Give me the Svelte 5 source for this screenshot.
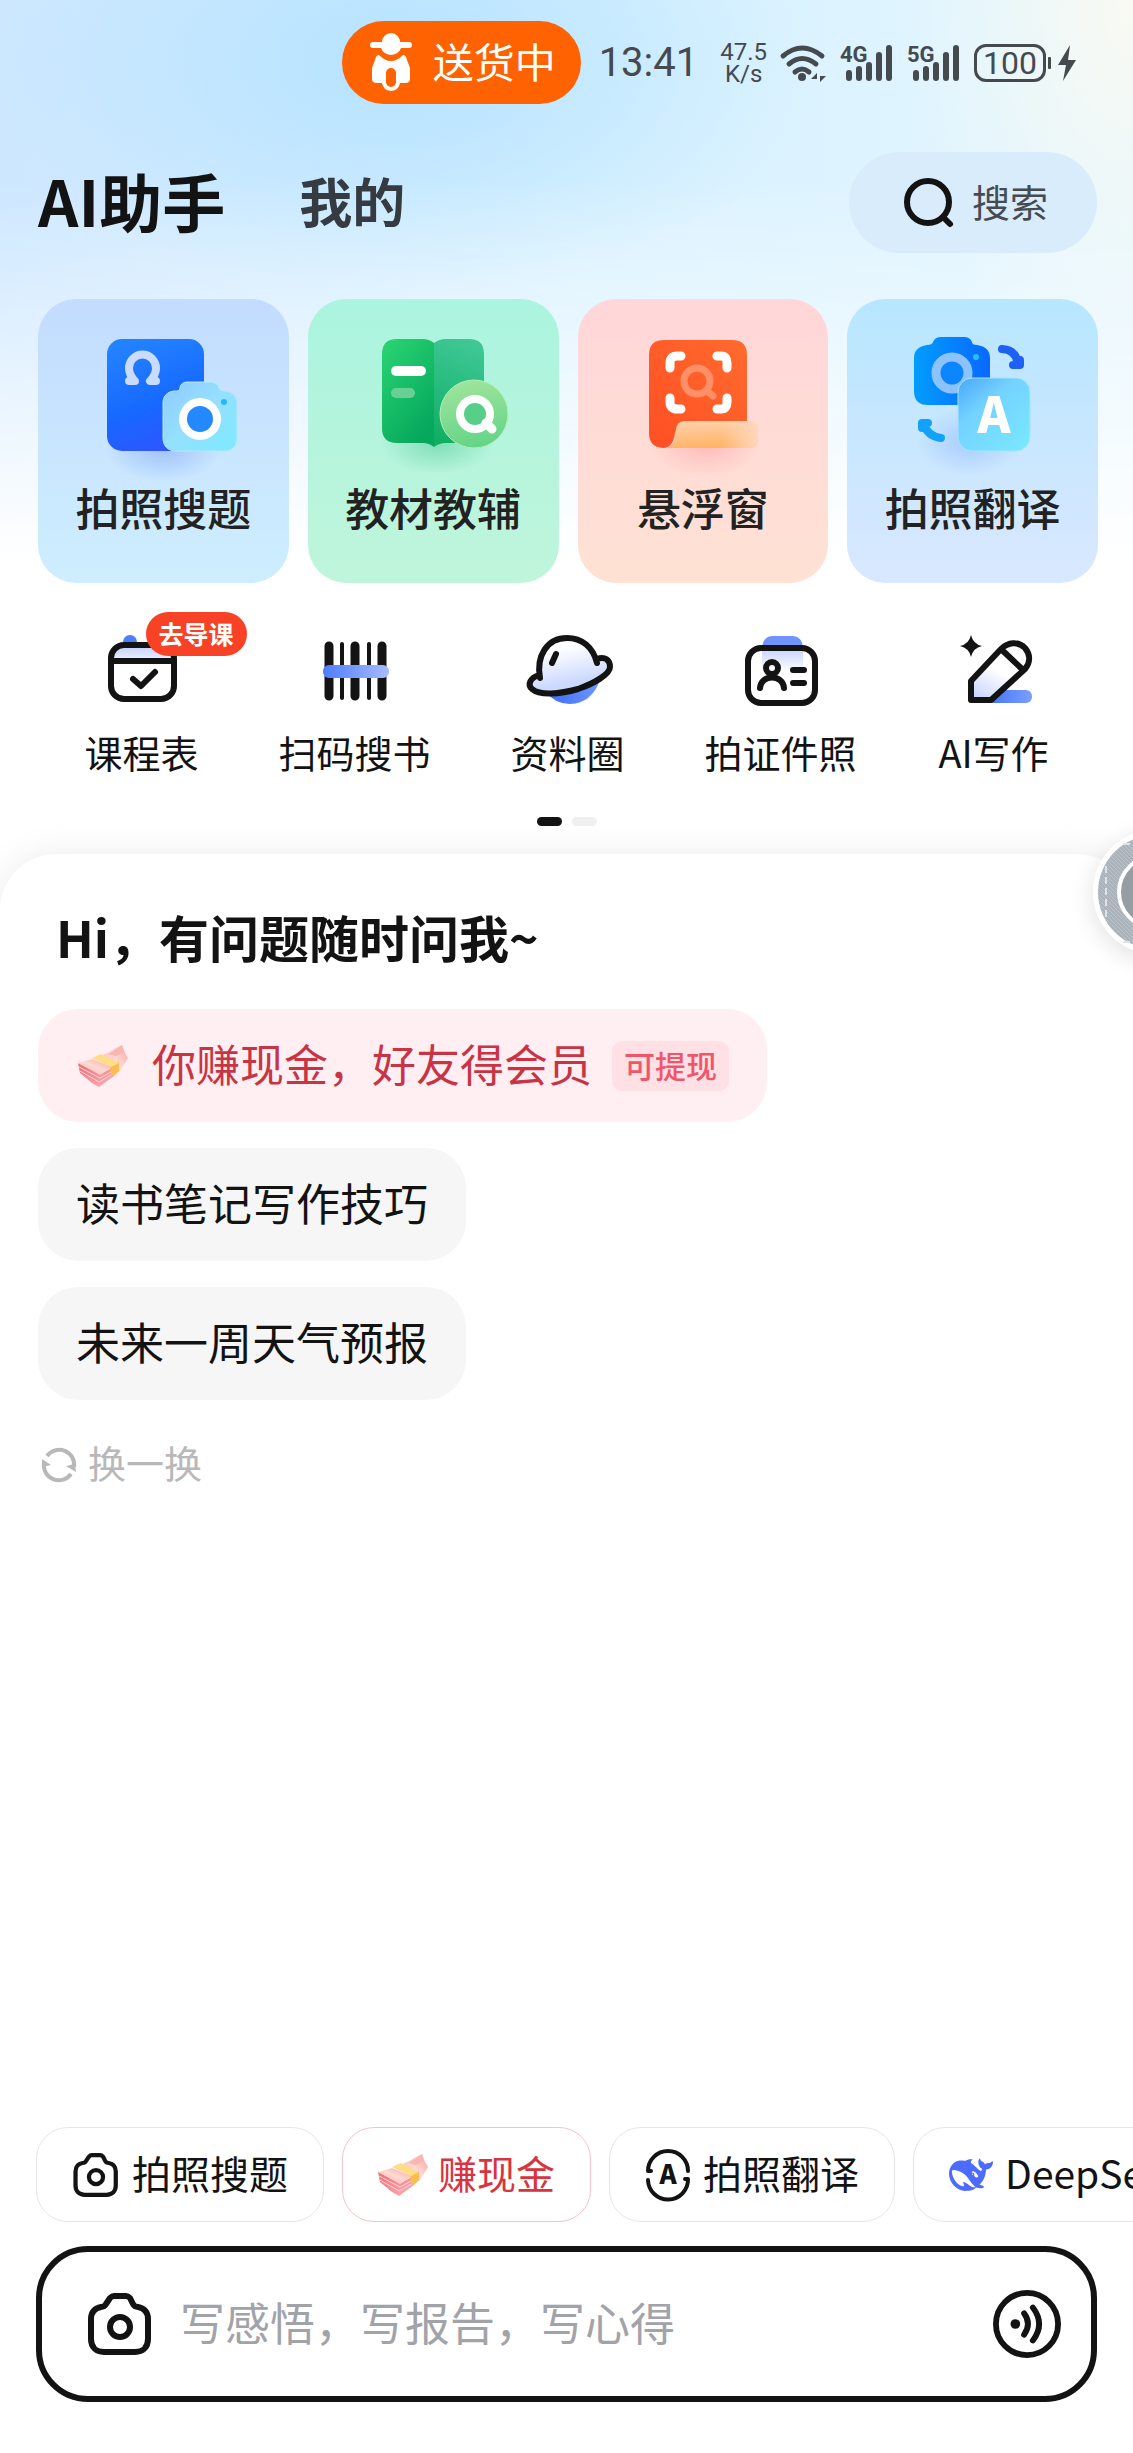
<script lang="ts">
    const cards = [
        { id: "solve", label: "拍照搜题" },
        { id: "books", label: "教材教辅" },
        { id: "float", label: "悬浮窗" },
        { id: "translate", label: "拍照翻译" },
    ];

    const tools = [
        { id: "schedule", label: "课程表", badge: "去导课" },
        { id: "barcode", label: "扫码搜书" },
        { id: "planet", label: "资料圈" },
        { id: "idcard", label: "拍证件照" },
        { id: "write", label: "AI写作" },
    ];

    const questions = ["读书笔记写作技巧", "未来一周天气预报"];

    const shortcuts = [
        { id: "camera", label: "拍照搜题" },
        { id: "cash-link", label: "赚现金" },
        { id: "translate", label: "拍照翻译" },
        { id: "deepseek", label: "DeepSeek" },
    ];

    let question = $state("");
</script>

{#snippet money()}
    <svg class="money" viewBox="0 0 50 42" aria-hidden="true">
        <defs>
            <linearGradient id="noteTop" x1="0" y1="1" x2="1" y2="0">
                <stop offset="0" stop-color="#f9a5a4" />
                <stop offset="0.5" stop-color="#fdd9d3" />
                <stop offset="1" stop-color="#f7a3a3" />
            </linearGradient>
            <linearGradient id="noteSide" x1="0" y1="0" x2="1" y2="1">
                <stop offset="0" stop-color="#ec6a72" />
                <stop offset="1" stop-color="#fbb3bd" />
            </linearGradient>
        </defs>
        <path d="M25 10 44 0 47 8 50 13 42 26 36 30Z" fill="url(#noteTop)" />
        <path d="M30 9 44 1 46 7 38 11Z" fill="#f9b5af" />
        <path d="M0 18 22 29 36 22 36 31 21 42 14 38 2 28Z" fill="url(#noteSide)" />
        <path d="M1 22 22 33 35 26M2 26 21 37 35 29" fill="none" stroke="#fcd3d3" stroke-width="1" />
        <path d="M0 18 14 14 34 22 22 30Z" fill="url(#noteTop)" />
        <path d="m32 19 9-2v9l-5 5-3-1Z" fill="#f8bd55" />
        <path d="m14 13 9-4 18 9-8 4Z" fill="#ffdc86" />
    </svg>
{/snippet}

{#snippet camera()}
    <svg class="line-icon" viewBox="0 0 68 68" aria-hidden="true">
        <path d="M28 6h12c2 0 3 1 4 2l3 6c1 2 3 3 5 3 6 1 10 5 10 12v20c0 8-5 13-13 13H18C10 62 5 57 5 49V29c0-7 4-11 10-12 3 0 4-1 5-3l4-6c1-1 2-2 4-2Z" />
        <circle cx="34" cy="37" r="10" />
    </svg>
{/snippet}

{#snippet signal(name: string)}
    <svg class="signal" viewBox="0 0 52 38" aria-hidden="true">
        <text x="0" y="18">{name}</text>
        <path d="M9 29v5M19 25v9M29 21v13M39 11v23M49 4v30" />
    </svg>
{/snippet}

<div class="page">
    <div class="status">
        <div class="delivery">
            <svg viewBox="0 0 44 56" width="44" height="56" aria-hidden="true">
                <path d="M4 7h9a9 9 0 0 1 18 0h9a3 3 0 0 1 0 6h-8q-2 6-10 7-8-1-10-7H4a3 3 0 0 1 0-6Z" fill="#fff" />
                <path d="M10 20q12 12 24 0 3 0 4 5l3 8v11q0 4-5 4h-5q-1 7-9 8-8-1-9-8H8q-5 0-5-4V33l3-8q1-5 4-5Z" fill="#fff" />
                <rect x="17" y="33" width="10" height="19" rx="5" fill="#ff6200" />
            </svg>
            <span>送货中</span>
        </div>
        <time>13:41</time>
        <div class="speed"><span>47.5</span><span>K/s</span></div>
        <svg class="wifi" viewBox="0 0 46 38" aria-hidden="true">
            <path d="M3 12Q22-4 42 12M9 20q13-11 27 0M15 28q7-6 14 0" />
            <circle cx="22" cy="33" r="4" />
            <path class="solid" d="m37 29-6 6h6Zm3 9 6-6h-6Z" />
        </svg>
        {@render signal("4G")}
        {@render signal("5G")}
        <div class="battery">
            <span class="level">100</span>
            <svg viewBox="0 0 32 38" width="32" height="38" aria-hidden="true">
                <path d="M3 14h1v10H3Z" stroke="#454a4e" stroke-width="2" stroke-linejoin="round" />
                <path d="M24 1 12 21h8l-3 16 13-21h-8Z" />
            </svg>
        </div>
    </div>

    <header>
        <nav>
            <a class="active" href="#assistant">AI助手</a>
            <a href="#mine">我的</a>
        </nav>
        <button class="search">
            <svg viewBox="0 0 50 50" width="50" height="50" aria-hidden="true">
                <circle cx="24" cy="24" r="21" />
                <path d="m39 39 7 7" />
            </svg>
            <span>搜索</span>
        </button>
    </header>

    <main>
        <section class="cards">
            {#each cards as card}
                <button class="card {card.id}">
                    <svg viewBox="0 0 160 130" aria-hidden="true">
                        {#if card.id === "solve"}
                            <defs>
                                <linearGradient id="solveBook" x1="0.3" y1="0" x2="0.6" y2="1">
                                    <stop offset="0" stop-color="#2383ff" />
                                    <stop offset="0.6" stop-color="#1768ff" />
                                    <stop offset="1" stop-color="#2f55ff" />
                                </linearGradient>
                                <linearGradient id="solveCam" x1="0" y1="0" x2="1" y2="1">
                                    <stop offset="0" stop-color="#8fcbff" />
                                    <stop offset="0.5" stop-color="#95e0ff" />
                                    <stop offset="1" stop-color="#7ceaff" />
                                </linearGradient>
                                <radialGradient id="solveShade">
                                    <stop offset="0" stop-color="#84a8f5" stop-opacity="0.6" />
                                    <stop offset="1" stop-color="#84a8f5" stop-opacity="0" />
                                </radialGradient>
                            </defs>
                            <ellipse cx="80" cy="118" rx="58" ry="34" fill="url(#solveShade)" />
                            <rect x="24" y="9" width="97" height="112" rx="15" fill="url(#solveBook)" />
                            <path d="M46 51h6q-6-6-6-13a13 13 0 0 1 27 0q0 7-6 13h6" fill="none" stroke="#c9dcff" stroke-width="8" stroke-linecap="round" stroke-linejoin="round" />
                            <path d="M105 52h22c6 0 8 3 9 6 1 2 2 3 5 3 8 0 13 5 13 12v35c0 8-5 13-13 13H93c-8 0-13-5-13-13V73c0-7 4-11 11-12 4 0 6 0 6-4 1-3 3-5 8-5Z" fill="url(#solveCam)" stroke="#b5eaff" stroke-width="1" />
                            <circle cx="117" cy="89" r="17" fill="#2488ff" stroke="#fff" stroke-width="8" />
                            <circle cx="141" cy="72" r="3" fill="#20b8ff" />
                        {:else if card.id === "books"}
                            <defs>
                                <linearGradient id="bookLeft" x1="0" y1="0" x2="0.6" y2="1">
                                    <stop offset="0" stop-color="#2bd573" />
                                    <stop offset="1" stop-color="#06a85c" />
                                </linearGradient>
                                <linearGradient id="bookRight" x1="0.5" y1="0" x2="0.3" y2="1">
                                    <stop offset="0" stop-color="#3ec795" />
                                    <stop offset="1" stop-color="#0fae63" />
                                </linearGradient>
                                <linearGradient id="bookLens" x1="0.4" y1="0" x2="0.6" y2="1">
                                    <stop offset="0" stop-color="#9fe49c" />
                                    <stop offset="1" stop-color="#62d487" />
                                </linearGradient>
                                <radialGradient id="bookShade">
                                    <stop offset="0" stop-color="#5fcf9c" stop-opacity="0.6" />
                                    <stop offset="1" stop-color="#5fcf9c" stop-opacity="0" />
                                </radialGradient>
                            </defs>
                            <ellipse cx="84" cy="114" rx="56" ry="30" fill="url(#bookShade)" />
                            <path d="M81 13q5-4 12-4h23q15 0 15 15v74q0 15-15 15H93q-7 0-12 4Z" fill="url(#bookRight)" />
                            <path d="M81 13q-5-4-11-4H44Q29 9 29 24v74q0 15 15 15h26q6 0 11 4Z" fill="url(#bookLeft)" />
                            <rect x="38" y="36" width="35" height="10" rx="5" fill="#fff" />
                            <rect x="38" y="58" width="24" height="10" rx="5" fill="#69cf92" />
                            <circle cx="121" cy="84" r="34" fill="url(#bookLens)" stroke="#b4efb5" stroke-width="1" />
                            <circle cx="122" cy="84" r="15" fill="#57cf89" stroke="#fff" stroke-width="8" />
                            <path d="m133 93 6 6" stroke="#fff" stroke-width="9" stroke-linecap="round" />
                        {:else if card.id === "float"}
                            <defs>
                                <linearGradient id="floatSheet" x1="1" y1="0" x2="0" y2="1">
                                    <stop offset="0" stop-color="#ff6b2d" />
                                    <stop offset="1" stop-color="#ff4f24" />
                                </linearGradient>
                                <linearGradient id="floatRoll" x1="0" y1="0" x2="0.2" y2="1">
                                    <stop offset="0" stop-color="#ffd2b0" />
                                    <stop offset="1" stop-color="#ffb567" />
                                </linearGradient>
                                <linearGradient id="floatFade" x1="0" y1="0" x2="1" y2="0">
                                    <stop offset="0.6" stop-color="#ffd7be" stop-opacity="0" />
                                    <stop offset="1" stop-color="#ffd7be" />
                                </linearGradient>
                                <radialGradient id="floatShade">
                                    <stop offset="0" stop-color="#ff9a9a" stop-opacity="0.5" />
                                    <stop offset="1" stop-color="#ff9a9a" stop-opacity="0" />
                                </radialGradient>
                            </defs>
                            <ellipse cx="82" cy="114" rx="56" ry="34" fill="url(#floatShade)" />
                            <path d="M41 10h68q15 0 15 15v70H60q-6 0-8 8-2 15-12 15-14-1-14-15V25q0-15 15-15Z" fill="url(#floatSheet)" />
                            <path d="M62 91h64q9 0 9 8v9q0 10-10 10H43q10-2 10-17 0-10 9-10Z" fill="url(#floatRoll)" />
                            <path d="M62 91h64q9 0 9 8v9q0 10-10 10H43q10-2 10-17 0-10 9-10Z" fill="url(#floatFade)" />
                            <path d="M47 38v-5q0-7 7-7h4M94 26h4q6 0 6 7v5M47 68v4q0 7 7 7h4M94 79h4q6 0 6-7v-4" fill="none" stroke="#fff" stroke-width="9" stroke-linecap="round" />
                            <circle cx="74" cy="51" r="13" fill="none" stroke="#ff8f66" stroke-width="7" />
                            <path d="m84 61 6 5" stroke="#ff8f66" stroke-width="7" stroke-linecap="round" />
                        {:else}
                            <defs>
                                <linearGradient id="transCam" x1="0" y1="0" x2="1" y2="0">
                                    <stop offset="0" stop-color="#009dff" />
                                    <stop offset="1" stop-color="#0a68ff" />
                                </linearGradient>
                                <linearGradient id="transTile" x1="0" y1="0" x2="0.8" y2="1">
                                    <stop offset="0" stop-color="#48a6fb" />
                                    <stop offset="0.4" stop-color="#74d2ff" />
                                    <stop offset="1" stop-color="#79e6ff" />
                                </linearGradient>
                                <radialGradient id="transShade">
                                    <stop offset="0" stop-color="#8bb0fb" stop-opacity="0.5" />
                                    <stop offset="1" stop-color="#8bb0fb" stop-opacity="0" />
                                </radialGradient>
                            </defs>
                            <ellipse cx="76" cy="112" rx="52" ry="34" fill="url(#transShade)" />
                            <path d="M48 7h23q6 0 8 5 0 3 5 3 13 2 13 13v33q0 14-14 14H35q-14 0-14-14V28q0-11 13-13 5 0 6-3 2-5 8-5Z" fill="url(#transCam)" />
                            <circle cx="59" cy="43" r="16" fill="#0c86ff" stroke="#8cc3ff" stroke-width="9" />
                            <circle cx="83" cy="27" r="3" fill="#28c0ff" />
                            <rect x="65" y="48" width="72" height="73" rx="14" fill="url(#transTile)" stroke="#a8e4ff" stroke-width="1" />
                            <text x="101" y="103" text-anchor="middle">A</text>
                            <path d="M109 19q14 1 15 13M120 35h7V30" fill="none" stroke="#1d62f5" stroke-width="8" stroke-linecap="round" stroke-linejoin="round" />
                            <path d="M48 108Q34 106 31 94M29 98v-5h6" fill="none" stroke="#12a2fa" stroke-width="8" stroke-linecap="round" stroke-linejoin="round" />
                        {/if}
                    </svg>
                    <span>{card.label}</span>
                </button>
            {/each}
        </section>

        <section class="tools">
            {#each tools as tool}
                <button class="tool">
                    <svg viewBox="0 0 80 80" aria-hidden="true">
                        {#if tool.id === "schedule"}
                            <defs>
                                <linearGradient id="calHead" x1="0" y1="0" x2="0" y2="1">
                                    <stop offset="0" stop-color="#bccdff" />
                                    <stop offset="1" stop-color="#eef2ff" />
                                </linearGradient>
                            </defs>
                            <circle cx="28" cy="14" r="7" fill="#4f7cff" />
                            <rect x="9" y="17" width="63" height="54" rx="13" fill="#fff" />
                            <path d="M9 32q0-15 14-15h35q14 0 14 15Z" fill="url(#calHead)" />
                            <g class="ink">
                                <rect x="9" y="17" width="63" height="54" rx="13" />
                                <path d="M9 33h63M31 51l8 7 14-14" />
                            </g>
                        {:else if tool.id === "barcode"}
                            <defs>
                                <linearGradient id="scanBand">
                                    <stop offset="0" stop-color="#4e7cff" />
                                    <stop offset="1" stop-color="#a5bdff" />
                                </linearGradient>
                            </defs>
                            <path d="M14 18v50M40 18v50M67 18v50" stroke="#131313" stroke-width="9" stroke-linecap="round" />
                            <path d="M27 16v54M54 16v54" stroke="#131313" stroke-width="4" stroke-linecap="round" />
                            <rect x="8" y="37" width="66" height="13" rx="6" fill="url(#scanBand)" />
                        {:else if tool.id === "planet"}
                            <defs>
                                <linearGradient id="planetFill" x1="0.3" y1="0" x2="0.6" y2="1">
                                    <stop offset="0.2" stop-color="#fff" />
                                    <stop offset="0.8" stop-color="#ccd9ff" />
                                </linearGradient>
                                <linearGradient id="planetBase">
                                    <stop offset="0" stop-color="#3c6dfb" />
                                    <stop offset="1" stop-color="#6e95ff" />
                                </linearGradient>
                            </defs>
                            <path d="M18 64q9 12 24 12 22-1 30-24Z" fill="url(#planetBase)" />
                            <path d="M12 50C8 28 19 10 39 10c15 0 26 9 30 24 9-4 13 0 13 5 0 6-15 15-32 22-19 6-39 6-47 0-3-4 1-8 9-11Z" fill="url(#planetFill)" />
                            <g class="ink">
                                <path d="M12 50C8 28 19 10 39 10c15 0 26 9 30 25M69 31c8-3 13 1 13 8 0 7-15 16-32 22-18 5-38 7-46 0-5-4-2-11 7-14" />
                                <path d="m28 26-4 9" />
                            </g>
                        {:else if tool.id === "idcard"}
                            <defs>
                                <linearGradient id="idGlow" x1="0" y1="0" x2="0" y2="1">
                                    <stop offset="0" stop-color="#c5d3ff" />
                                    <stop offset="1" stop-color="#fff" />
                                </linearGradient>
                            </defs>
                            <path d="M21 20q1-12 11-12h19q10 0 11 12Z" fill="#6f92fb" />
                            <rect x="7" y="20" width="67" height="55" rx="13" fill="#fff" />
                            <rect x="21" y="20" width="41" height="24" fill="url(#idGlow)" />
                            <g class="ink">
                                <rect x="7" y="20" width="67" height="55" rx="13" />
                                <circle cx="31" cy="40" r="6" />
                                <path d="M19 60c1-14 23-14 24 0M52 42h11M52 55h11" />
                            </g>
                        {:else}
                            <defs>
                                <linearGradient id="penFill" x1="0.2" y1="1" x2="0.5" y2="0.5">
                                    <stop offset="0" stop-color="#c9d6ff" />
                                    <stop offset="1" stop-color="#fff" />
                                </linearGradient>
                                <linearGradient id="penBar">
                                    <stop offset="0" stop-color="#3f6ff8" />
                                    <stop offset="1" stop-color="#7ba0ff" />
                                </linearGradient>
                            </defs>
                            <rect x="32" y="62" width="46" height="13" rx="6" fill="url(#penBar)" />
                            <path d="M17 53 47 21c7-7 17-8 24-1 6 7 5 15 0 21L37 72H17Z" fill="url(#penFill)" />
                            <g class="ink">
                                <path d="M17 53 47 21c7-7 17-8 24-1 6 7 5 15 0 21L37 72H17ZM48 22l19 18" />
                            </g>
                            <path d="M17 7q2 9 11 11-9 2-11 11-2-9-11-11 9-2 11-11Z" fill="#131313" />
                        {/if}
                    </svg>
                    {#if tool.badge}
                        <span class="badge">{tool.badge}</span>
                    {/if}
                    <span>{tool.label}</span>
                </button>
            {/each}
        </section>
        <div class="dots"><i class="on"></i><i></i></div>

        <section class="sheet">
            <h1>Hi，有问题随时问我~</h1>
            <div class="questions">
                <button class="question cash">
                    {@render money()}
                    <span>你赚现金，好友得会员</span>
                    <span class="tag">可提现</span>
                </button>
                {#each questions as q}
                    <button class="question" onclick={() => (question = q)}><span>{q}</span></button>
                {/each}
            </div>
            <button class="refresh">
                <svg viewBox="0 0 36 36" width="36" height="36" aria-hidden="true">
                    <path d="M6 9a15 15 0 0 1 27 11M30 27A15 15 0 0 1 3 16" />
                    <path class="solid" d="m35 25-10-6 9-2ZM1 12l9 6-9 2Z" />
                </svg>
                <span>换一换</span>
            </button>

            <footer>
                <div class="shortcuts">
                    {#each shortcuts as item}
                        <button class="shortcut {item.id}">
                            {#if item.id === "camera"}
                                {@render camera()}
                            {:else if item.id === "cash-link"}
                                {@render money()}
                            {:else if item.id === "translate"}
                                <svg class="line-icon" viewBox="0 0 46 46" aria-hidden="true">
                                    <path d="M6 19H3A20 20 0 0 1 43 19M40 27h3A20 20 0 0 1 3 28" />
                                    <text x="23" y="32" text-anchor="middle">A</text>
                                </svg>
                            {:else}
                                <svg class="whale" viewBox="0 0 24 24" aria-hidden="true">
                                    <path d="M23.748 4.482c-.254-.124-.364.113-.512.234-.051.039-.094.09-.137.136-.372.397-.806.657-1.373.626-.829-.046-1.537.214-2.163.848-.133-.782-.575-1.248-1.247-1.548-.352-.156-.708-.311-.955-.65-.172-.241-.219-.51-.305-.774-.055-.16-.11-.323-.293-.35-.2-.031-.278.136-.356.276-.313.572-.434 1.202-.422 1.84.027 1.436.633 2.58 1.838 3.393.137.093.172.187.129.323-.082.28-.18.552-.266.833-.055.179-.137.217-.329.14a5.526 5.526 0 0 1-1.736-1.18c-.857-.828-1.631-1.742-2.597-2.458a11.365 11.365 0 0 0-.689-.471c-.985-.957.13-1.743.388-1.836.27-.098.093-.432-.779-.428-.872.004-1.67.295-2.687.684a3.055 3.055 0 0 1-.465.137 9.597 9.597 0 0 0-2.883-.102c-1.885.21-3.39 1.102-4.497 2.623C.082 8.606-.231 10.684.152 12.85c.403 2.284 1.569 4.175 3.36 5.653 1.858 1.533 3.997 2.284 6.438 2.14 1.482-.085 3.133-.284 4.994-1.86.47.234.962.327 1.78.397.63.059 1.236-.03 1.705-.128.735-.156.684-.837.419-.961-2.155-1.004-1.682-.595-2.113-.926 1.096-1.296 2.746-2.642 3.392-7.003.05-.347.007-.565 0-.845-.004-.17.035-.237.23-.256a4.173 4.173 0 0 0 1.545-.475c1.396-.763 1.96-2.015 2.093-3.517.02-.23-.004-.467-.247-.588zM11.581 18c-2.089-1.642-3.102-2.183-3.52-2.16-.392.024-.321.471-.235.763.09.288.207.486.371.739.114.167.192.416-.113.603-.673.416-1.842-.14-1.897-.167-1.361-.802-2.5-1.86-3.301-3.307-.774-1.393-1.224-2.887-1.298-4.482-.02-.386.093-.522.477-.592a4.696 4.696 0 0 1 1.529-.039c2.132.312 3.946 1.265 5.468 2.774.868.86 1.525 1.887 2.202 2.891.72 1.066 1.494 2.082 2.48 2.914.348.292.625.514.891.677-.802.09-2.14.11-3.054-.614zm1-6.44a.306.306 0 0 1 .415-.287.302.302 0 0 1 .2.288.306.306 0 0 1-.31.307.303.303 0 0 1-.304-.308zm3.11 1.596c-.2.081-.399.151-.59.16a1.245 1.245 0 0 1-.798-.254c-.274-.23-.47-.358-.552-.758a1.73 1.73 0 0 1 .016-.588c.07-.327-.008-.537-.239-.727-.187-.156-.426-.199-.688-.199a.559.559 0 0 1-.254-.078.253.253 0 0 1-.114-.358c.028-.054.16-.186.192-.21.356-.202.767-.136 1.146.016.352.144.618.408 1.001.782.391.451.462.576.685.914.176.265.336.537.445.848.067.195-.019.354-.25.452z" />
                                </svg>
                            {/if}
                            <span>{item.label}</span>
                        </button>
                    {/each}
                </div>
                <div class="composer">
                    <button aria-label="拍照">{@render camera()}</button>
                    <input type="text" aria-label="提问" placeholder="写感悟，写报告，写心得" bind:value={question} />
                    <button aria-label="语音">
                        <svg class="line-icon" viewBox="0 0 70 70" aria-hidden="true">
                            <circle cx="35" cy="35" r="32" />
                            <path d="M32 24q8 11 0 22M41 18q13 17 0 34" />
                            <circle class="solid" cx="23" cy="35" r="5" />
                        </svg>
                    </button>
                </div>
            </footer>
        </section>
    </main>

    <button class="floating" aria-label="悬浮球">
        <svg viewBox="0 0 124 124" aria-hidden="true">
            <defs>
                <pattern id="denim" width="4" height="4" patternUnits="userSpaceOnUse">
                    <rect width="4" height="4" fill="#a9b3b9" />
                    <path d="M0 0l4 4" stroke="#bcc4c9" stroke-width="1" />
                </pattern>
            </defs>
            <circle cx="62" cy="62" r="62" fill="#fff" />
            <circle cx="62" cy="62" r="57" fill="url(#denim)" />
            <path d="M13 36v56M30 14h60M30 112h60" stroke="#dde3e6" stroke-width="2" stroke-dasharray="7 4" />
            <circle cx="62" cy="62" r="36" fill="#969ea4" stroke="#fff" stroke-width="4" />
        </svg>
    </button>
</div>

<style>
    :global(body) {
        margin: 0;
    }
    .page {
        position: relative;
        display: flex;
        flex-direction: column;
        min-height: 100vh;
        overflow: hidden;
        box-sizing: border-box;
        font-family: "Noto Sans CJK SC", sans-serif;
        color: #131313;
        background:
            linear-gradient(180deg, transparent 180px, #fff 560px),
            radial-gradient(ellipse 240px 420px at 1133px 0, #f9faf3, transparent),
            radial-gradient(ellipse 420px 240px at 400px 60px, #b5e2ff, transparent),
            linear-gradient(90deg, #cde7ff, #daf2ff 50%, #e0f5ff);
    }
    button {
        margin: 0;
        padding: 0;
        border: none;
        background: none;
        font: inherit;
        color: inherit;
        cursor: pointer;
    }
    svg {
        display: block;
        flex-shrink: 0;
        overflow: visible;
    }
    .status {
        display: flex;
        align-items: center;
        justify-content: flex-end;
        padding: 21px 55px 0 0;
        color: #454a4e;
        fill: #454a4e;
    }
    .delivery {
        display: flex;
        align-items: center;
        gap: 20px;
        height: 83px;
        padding: 0 25px 0 27px;
        border-radius: 42px;
        background: #ff6200;
        color: #fff;
        font-size: 41px;
        margin-right: 18px;
    }
    .delivery span,
    .search span,
    .question span,
    .refresh span,
    .shortcut span {
        padding-bottom: 5px;
    }
    time {
        font-family: Roboto, sans-serif;
        font-size: 40px;
        margin-right: 22px;
    }
    .speed {
        display: flex;
        flex-direction: column;
        align-items: center;
        margin-right: 13px;
        font-family: Roboto, sans-serif;
        font-size: 24px;
        line-height: 22px;
    }
    .wifi {
        width: 46px;
        height: 38px;
        margin-right: 14px;
    }
    .wifi path {
        fill: none;
        stroke: #454a4e;
        stroke-width: 5;
        stroke-linecap: round;
    }
    .wifi .solid {
        fill: #454a4e;
        stroke: none;
    }
    .signal {
        width: 52px;
        height: 38px;
        margin-right: 15px;
    }
    .signal text {
        font-family: Roboto, sans-serif;
        font-size: 22px;
        font-weight: 700;
    }
    .signal path {
        stroke: #454a4e;
        stroke-width: 6;
        stroke-linecap: round;
    }
    .battery {
        display: flex;
        align-items: center;
    }
    .level {
        padding: 0 6px;
        border: 3px solid #454a4e;
        border-radius: 12px;
        font-family: Roboto, sans-serif;
        font-size: 32px;
        line-height: 32px;
    }
    header {
        display: flex;
        align-items: center;
        justify-content: space-between;
        padding: 48px 36px 0 38px;
    }
    nav {
        display: flex;
        align-items: center;
        gap: 74px;
        padding-bottom: 5px;
    }
    nav a {
        color: #353b40;
        font-size: 53px;
        font-weight: 700;
        line-height: 80px;
        text-decoration: none;
    }
    nav .active {
        color: #131313;
        font-size: 63px;
    }
    .search {
        display: flex;
        align-items: center;
        gap: 18px;
        height: 101px;
        padding: 0 49px 0 55px;
        border-radius: 51px;
        background: #d9ecfb;
        color: #454b50;
        font-size: 38px;
    }
    .search svg {
        fill: none;
        stroke: #131313;
        stroke-width: 6;
        stroke-linecap: round;
    }
    main {
        display: flex;
        flex: 1;
        flex-direction: column;
    }
    .cards {
        display: grid;
        grid-template-columns: repeat(4, 1fr);
        gap: 19px;
        padding: 46px 35px 0 38px;
    }
    .card {
        display: flex;
        flex-direction: column;
        align-items: center;
        gap: 19px;
        padding: 31px 0 48px;
        border-radius: 38px;
        color: #222;
        font-size: 44px;
        font-weight: 500;
        line-height: 56px;
    }
    .card svg {
        width: 160px;
        height: 130px;
    }
    .card text {
        fill: #fff;
        font-family: "Noto Sans CJK SC", sans-serif;
        font-size: 50px;
        font-weight: 900;
    }
    .solve {
        background: linear-gradient(#c3dcff, #ceeeff);
    }
    .books {
        background: linear-gradient(#abf4df, #bff5db);
    }
    .float {
        background: linear-gradient(#ffd6d9, #ffe2d4);
    }
    .card.translate {
        background: linear-gradient(#b8e6ff, #d9e8ff);
    }
    .tools {
        display: grid;
        grid-template-columns: repeat(5, 1fr);
        padding: 45px 33px 0 35px;
    }
    .tool {
        position: relative;
        display: flex;
        flex-direction: column;
        align-items: center;
        gap: 20px;
        font-size: 38px;
        line-height: 48px;
    }
    .tool svg {
        width: 80px;
        height: 80px;
    }
    .ink {
        fill: none;
        stroke: #131313;
        stroke-width: 6;
        stroke-linecap: round;
        stroke-linejoin: round;
    }
    .badge {
        position: absolute;
        top: -16px;
        left: 50%;
        margin-left: 4px;
        padding: 0 13px 2px;
        border-radius: 22px;
        background: #f74225;
        color: #fff;
        font-size: 25px;
        font-weight: 700;
        line-height: 42px;
    }
    .dots {
        display: flex;
        justify-content: center;
        gap: 10px;
        padding: 41px 0 28px;
    }
    .dots i {
        width: 25px;
        height: 9px;
        border-radius: 5px;
        background: #f0f0f0;
    }
    .dots .on {
        background: #131313;
    }
    .sheet {
        display: flex;
        flex: 1;
        flex-direction: column;
        align-items: flex-start;
        padding: 52px 0 51px 38px;
        border-radius: 56px 56px 0 0;
        background: #fff;
        box-shadow: 0 0 36px rgba(0, 0, 0, 0.08);
    }
    h1 {
        margin: 0 0 43px 18px;
        font-size: 50px;
        font-weight: 700;
        line-height: 60px;
    }
    .questions {
        display: flex;
        flex-direction: column;
        align-items: flex-start;
        gap: 26px;
    }
    .question {
        display: flex;
        align-items: center;
        height: 113px;
        padding: 0 38px;
        border-radius: 40px;
        background: #f6f6f6;
        font-size: 44px;
    }
    .cash {
        gap: 20px;
        background: #ffeff2;
        color: #c93445;
    }
    .money {
        width: 50px;
        height: 42px;
    }
    .cash .money {
        margin: 0 4px 0 2px;
    }
    .question .tag {
        padding: 0 12px 2px;
        border-radius: 10px;
        background: #ffe0e5;
        color: #f0566a;
        font-size: 31px;
        font-weight: 500;
        line-height: 48px;
    }
    .refresh {
        display: flex;
        align-items: center;
        gap: 11px;
        margin-top: 38px;
        padding-left: 3px;
        color: #b8b8b8;
        font-size: 38px;
        line-height: 48px;
    }
    .refresh svg {
        fill: none;
        stroke: #b8b8b8;
        stroke-width: 4;
    }
    .refresh .solid {
        fill: #b8b8b8;
        stroke: none;
    }
    footer {
        width: 100%;
        margin-top: auto;
    }
    .shortcuts {
        display: flex;
        gap: 18px;
        overflow: hidden;
        margin: 0 0 24px -2px;
    }
    .shortcut {
        display: flex;
        flex-shrink: 0;
        align-items: center;
        gap: 12px;
        box-sizing: border-box;
        height: 95px;
        padding: 0 35px;
        border: 1px solid #e6e6e6;
        border-radius: 32px;
        background: #fff;
        font-size: 39px;
        white-space: nowrap;
    }
    .cash-link {
        gap: 10px;
        border-color: #f3c3ca;
        color: #d8343f;
    }
    .line-icon {
        width: 48px;
        height: 48px;
        fill: none;
        stroke: #131313;
        stroke-width: 6;
        stroke-linecap: round;
        stroke-linejoin: round;
    }
    .line-icon .solid {
        fill: #131313;
        stroke: none;
    }
    .shortcut .line-icon {
        stroke-width: 6;
    }
    .shortcut.translate .line-icon {
        width: 46px;
        height: 46px;
        stroke-width: 4;
    }
    .line-icon text {
        fill: #131313;
        stroke: none;
        font-size: 26px;
        font-weight: 900;
    }
    .whale {
        width: 44px;
        height: 44px;
        fill: #4d6bfe;
    }
    .composer {
        display: flex;
        align-items: center;
        gap: 26px;
        box-sizing: border-box;
        height: 156px;
        margin: 0 36px 0 -2px;
        padding: 0 30px 0 44px;
        border: 6px solid #131313;
        border-radius: 52px;
    }
    .composer .line-icon {
        width: 68px;
        height: 68px;
    }
    input {
        flex: 1;
        min-width: 0;
        height: 66px;
        padding: 0 0 6px;
        border: none;
        outline: none;
        background: none;
        color: inherit;
        font: inherit;
        font-size: 45px;
    }
    input::placeholder {
        color: #a2a3a9;
        opacity: 1;
    }
    .floating {
        position: absolute;
        top: 830px;
        right: -84px;
        width: 124px;
        height: 124px;
        border-radius: 50%;
        box-shadow: 0 6px 24px rgba(0, 0, 0, 0.12);
    }
</style>
